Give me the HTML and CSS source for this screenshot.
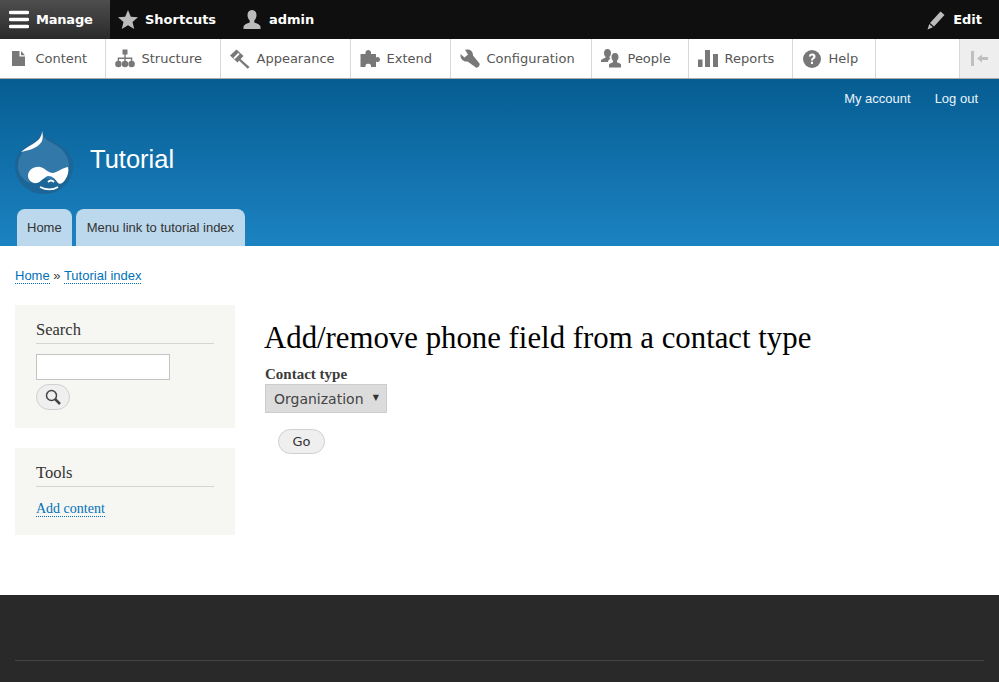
FILE: index.html
```html
<!DOCTYPE html>
<html lang="en">
<head>
<meta charset="utf-8">
<title>Tutorial</title>
<link rel="stylesheet" href="styles.css">
</head>
<body>
<div class="bar">
  <a class="bar-item active"><svg class="bar-icon" viewBox="0 0 20 20"><path d="M1.500 .8h17a1.700 1.700 0 0 1 0 3.500h-17a1.700 1.700 0 0 1 0-3.500zM1.500 7.800h17a1.700 1.700 0 0 1 0 3.500h-17a1.700 1.700 0 0 1 0-3.500zM1.500 14.800h17a1.700 1.700 0 0 1 0 3.500h-17a1.700 1.700 0 0 1 0-3.500z" fill="#fff"/></svg>Manage</a>
  <a class="bar-item"><svg class="bar-icon" viewBox="0 0 20 20"><path d="M10 0l2.800 6.700 7.200.6-5.500 4.700 1.700 7-6.200-3.800L3.800 19l1.700-7L0 7.300l7.200-.6z" fill="#bbb"/></svg>Shortcuts</a>
  <a class="bar-item"><svg class="bar-icon" viewBox="0 0 20 20"><path d="M10 0c3 0 4.500 2.200 4.500 5 0 2.500-1 4.500-2.200 5.500v2c2.500.8 5.700 2 6.200 4v2.500H1.500V16.500c.5-2 3.700-3.200 6.200-4v-2C6.500 9.500 5.500 7.500 5.500 5 5.500 2.200 7 0 10 0z" fill="#bbb"/></svg>admin</a>
  <a class="bar-item bar-edit"><svg class="bar-icon" viewBox="0 0 20 20"><path d="M14.500 1.500l4 3.500L8 16.500l-4-3.500zM3.300 14l3.600 3.200L1.500 19.500z" fill="#bbb"/></svg>Edit</a>
</div>
<nav class="tray">
  <a class="tray-item"><svg class="tray-icon" viewBox="0 0 20 20"><path d="M3 2h7.500v5.500H16V17H3zM12 2l4 4.200h-4z" fill="#787878"/></svg>Content</a>
  <a class="tray-item"><svg class="tray-icon" viewBox="0 0 20 20"><path d="M7.500 0.500h5v5h-5zM9.300 5h1.400v3.500h6.600V13h-1.400v-3H10.700v3H9.300v-3H4.100v3H2.700V8.500h6.600z" fill="#787878"/><circle cx="3.400" cy="15" r="3.200" fill="#787878"/><circle cx="10" cy="15" r="3.200" fill="#787878"/><circle cx="16.600" cy="15" r="3.200" fill="#787878"/></svg>Structure</a>
  <a class="tray-item"><svg class="tray-icon" viewBox="0 0 20 20"><path d="M6.500 .5L13.500 7 7.500 13.500 0 6.500z" fill="#787878"/><path d="M9 4.500L4 9.500" stroke="#fff" stroke-width="1.800"/><path d="M10.500 10l9 8-1.800 1.800-8.700-8.300z" fill="#787878"/></svg>Appearance</a>
  <a class="tray-item"><svg class="tray-icon" viewBox="0 0 20 20"><path d="M.5 5h5V3.500C5.500 0 11 0 11 3.500V5h5v3.500c2.500-1.500 4 .3 4 2s-1.500 3.500-4 2V18h-5v-1.500c0-2.500-5.500-2.500-5.500 0V18h-5z" fill="#787878"/></svg>Extend</a>
  <a class="tray-item"><svg class="tray-icon" viewBox="0 0 20 20"><path d="M7.500 .5C11 .5 13 3 13 6.500l6.500 8c1 1.500-1.500 5-3.500 4l-8.500-6C4 13 .5 10.500 .5 6.500V5l4 3.500L8 5.500 5 .8z" fill="#787878"/></svg>Configuration</a>
  <a class="tray-item"><svg class="tray-icon" viewBox="0 0 20 20"><path d="M6.500 0C9 0 10 2 10 4c0 1.500-.6 3-1.500 3.700V9l1 .5c-1.500 1-2.300 2-2.500 3.500H0v-1.500c.5-1.500 2.700-2 4.500-2.800V7.700C3.600 7 3 5.500 3 4c0-2 1-4 3.500-4z" fill="#787878"/><path d="M14 4c2.500 0 3.500 2 3.500 4 0 1.500-.6 3-1.500 3.700v1.600c1.500.6 3.500 1 4 2.200v3H8v-3c.5-1.200 2.500-1.600 4-2.200v-1.600C11.100 11 10.500 9.500 10.500 8c0-2 1-4 3.500-4z" fill="#787878"/></svg>People</a>
  <a class="tray-item"><svg class="tray-icon" viewBox="0 0 20 20"><path d="M0 10.500h4.500V18H0zM7 1h5v17H7zM15 5h5v13h-5z" fill="#787878"/></svg>Reports</a>
  <a class="tray-item"><svg class="tray-icon" viewBox="0 0 20 20"><circle cx="10" cy="10" r="9" fill="#787878"/><path d="M6.800 7.500C7 5.500 8.500 4.500 10.200 4.500c2 0 3.300 1.200 3.300 2.900 0 2.400-2.500 2.300-2.500 4.100H9c0-2.800 2.300-2.800 2.300-4.100 0-.7-.5-1-1.200-1-.8 0-1.200.5-1.300 1.100z M8.900 12.800H11v2.200H8.900z" fill="#fff"/></svg>Help</a>
  <div class="tray-spacer"></div>
  <a class="tray-toggle"><svg viewBox="0 0 20 20" width="20" height="20"><path d="M1 2h3v15H1z" fill="#bfbfbf"/><path d="M7 9.500L12 5.500v2.500h6v3h-6v2.500z" fill="#bfbfbf"/></svg></a>
</nav>
<header class="header">
  <div class="secondary-menu"><a>My account</a><a>Log out</a></div>
  <div class="brand">
    <svg class="logo" viewBox="0 0 58 64">
      <path d="M27 0c1 6 6 8 13 12 10 5 18 13 18 24 0 16-13 28-29 28S0 52 0 36c0-12 8-19 16-24C21 9 26 6 27 0z" fill="#1c6597"/>
      <path d="M27 3c1 5 6 8 12 11 8 4 15 12 15 22 0 13-11 20-25 20C14 56 3 48 3 36 3 26 9 19 17 14 22 11 26 8 27 3z" fill="#3278a8"/>
      <path d="M13 48c3 8 9 13 17 13 8 0 14-4 18-11-4 1-32-4-35-2z" fill="#1c6597"/>
      <path d="M27 1c0 6-4 10-9 13-5 3-9 5-12 8 3-1 5-1 8-2 7-2 11-5 13-9 1-3 1-7 0-10z" fill="#fff"/>
      <path d="M13 46c0-6 6-10 12-9 5 1 8 6 13 6 5-1 9-5 15-6 1 4 0 9-3 13-2 3-5 5-7 3-3-4-5-7-10-7-4 1-7 6-11 7-5 1-9-3-9-7z" fill="#fff"/>
      <path d="M25 57c6 3 13 3 18 0M33 52c2-2 4-2 6 0" stroke="#fff" stroke-width="1.800" fill="none"/>
    </svg>
    <div class="site-name">Tutorial</div>
  </div>
  <ul class="tabs">
    <li class="tab">Home</li>
    <li class="tab">Menu link to tutorial index</li>
  </ul>
</header>
<div class="main">
  <div class="breadcrumb"><a>Home</a><span class="sep"> » </span><a>Tutorial index</a></div>
  <div class="columns">
    <aside class="sidebar">
      <section class="block">
        <h2 class="block-title">Search</h2>
        <div class="search-input"></div>
        <button class="search-button"><svg viewBox="0 0 18 18" width="18" height="18"><circle cx="7.500" cy="7.500" r="5" fill="none" stroke="#444" stroke-width="1.500"/><path d="M11 11l5 5" stroke="#444" stroke-width="2.500"/></svg></button>
      </section>
      <section class="block">
        <h2 class="block-title">Tools</h2>
        <a class="block-link">Add content</a>
      </section>
    </aside>
    <main class="content">
      <h1 class="page-title">Add/remove phone field from a contact type</h1>
      <div class="label">Contact type</div>
      <div class="select">Organization<span class="caret">▼</span></div>
      <button class="go">Go</button>
    </main>
  </div>
</div>
<footer class="footer"><div class="footer-rule"></div></footer>
</body>
</html>
```
FILE: styles.css
```css
* { box-sizing: border-box; }
html, body { margin: 0; height: 682px; overflow: hidden; background: #fff; }
body { font-family: "Liberation Sans", Arial, sans-serif; color: #3b3b3b; }
.bar { display: flex; height: 39px; background: #0f0f0f; font: bold 13px "DejaVu Sans", sans-serif; color: #fff; }
.bar-item { display: flex; align-items: center; padding: 0 17px 0 9px; gap: 7px; }
.bar-item.active { width: 110px; background: linear-gradient(#4e4e4e, #2a2a2a); letter-spacing: -.2px; }
.bar-item:nth-child(2) { padding-left: 8px; width: 124px; }
.bar-item:nth-child(3) { padding-left: 8px; }
.bar-edit { margin-left: auto; }
.bar-icon { width: 20px; height: 20px; flex: none; }
.tray { display: flex; height: 40px; background: #fff; border-bottom: 1px solid #aaa; font: 13px "DejaVu Sans", sans-serif; color: #565656; }
.tray-item { display: flex; align-items: center; gap: 6.500px; padding: 0 0 0 9px; border-right: 1px solid #d8d8d8; }
.tray-item:nth-child(1) { width: 106px; }
.tray-item:nth-child(2) { width: 115px; }
.tray-item:nth-child(3) { width: 130px; }
.tray-item:nth-child(4) { width: 100px; }
.tray-item:nth-child(5) { width: 141px; }
.tray-item:nth-child(6) { width: 97px; }
.tray-item:nth-child(7) { width: 104px; }
.tray-item:nth-child(8) { width: 83px; }
.tray-icon { width: 20px; height: 20px; flex: none; }
.tray-spacer { flex: 1; }
.tray-toggle { width: 40px; display: flex; align-items: center; justify-content: center; background: #eee; border-left: 1px solid #d8d8d8; }
.header { height: 167px; background: linear-gradient(#065d92, #1c83c2); padding: 0 15px; display: flex; flex-direction: column; color: #fff; }
.secondary-menu { display: flex; justify-content: flex-end; gap: 24px; padding: 12px 6px 0 0; font-size: 13px; line-height: 16px; color: #e8f4fc; }
.brand { display: flex; align-items: center; gap: 17px; margin-top: 23px; height: 64px; }
.logo { width: 58px; height: 64px; flex: none; }
.site-name { font-size: 25.500px; line-height: 30px; padding-bottom: 6px; }
.tabs { list-style: none; display: flex; gap: 4px; margin: auto 0 0 2px; padding: 0; }
.tab { height: 37px; padding: 0 10px; line-height: 37px; font-size: 13px; color: #333; background: #bcd8ec; border-radius: 8px 8px 0 0; }
.tab:nth-child(2) { padding: 0 11px; }
.main { padding: 21px 15px 0; height: 349px; }
.breadcrumb { font-size: 13px; line-height: 17px; height: 38px; color: #3b3b3b; }
.breadcrumb a { color: #0071b8; border-bottom: 1px dotted #0071b8; }
.columns { display: flex; }
.sidebar { width: 220px; flex: none; }
.block { background: #f6f6f2; padding: 15px 21px 0; margin-bottom: 20px; }
.block:first-child { height: 123px; }
.block:last-child { height: 87px; }
.block-title { margin: 0 0 10px; padding-bottom: 4px; border-bottom: 1px solid #d6d6d0; font: 400 16.500px/19px "Liberation Serif", serif; color: #333; }
.block:last-child .block-title { margin-bottom: 12px; }
.search-input { width: 134px; height: 26px; background: #fff; border: 1px solid #c4c4c4; }
.search-button { display: flex; align-items: center; justify-content: center; width: 34px; height: 26px; margin-top: 4px; padding: 0; background: #efefef; border: 1px solid #d0d0d0; border-radius: 13px; }
.block-link { font: 14px/15px "Liberation Serif", serif; color: #0071b8; border-bottom: 1px dotted #0071b8; }
.content { margin-left: 30px; padding-top: 17px; }
.page-title { margin: 0 0 0 -1px; font: 400 30.800px/32px "Liberation Serif", serif; color: #000; }
.label { margin-top: 12px; font: bold 15px/16px "Liberation Serif", serif; color: #3b3b3b; }
.select { display: flex; align-items: center; width: 122px; height: 29px; margin-top: 2px; padding-left: 8px; background: #dcdcdc; border: 1px solid #ccc; font: 14px "DejaVu Sans", sans-serif; color: #444; position: relative; }
.caret { position: absolute; right: 7px; top: 8px; font-size: 8px; color: #333; }
.go { display: block; width: 47px; height: 25px; margin: 16px 0 0 13px; padding: 0; background: #efefef; border: 1px solid #d0d0d0; border-radius: 13px; font: 13px "DejaVu Sans", sans-serif; color: #333; }
.footer { height: 87px; background: #292929; padding: 65px 15px 0; }
.footer-rule { height: 1px; background: #444; }
```
